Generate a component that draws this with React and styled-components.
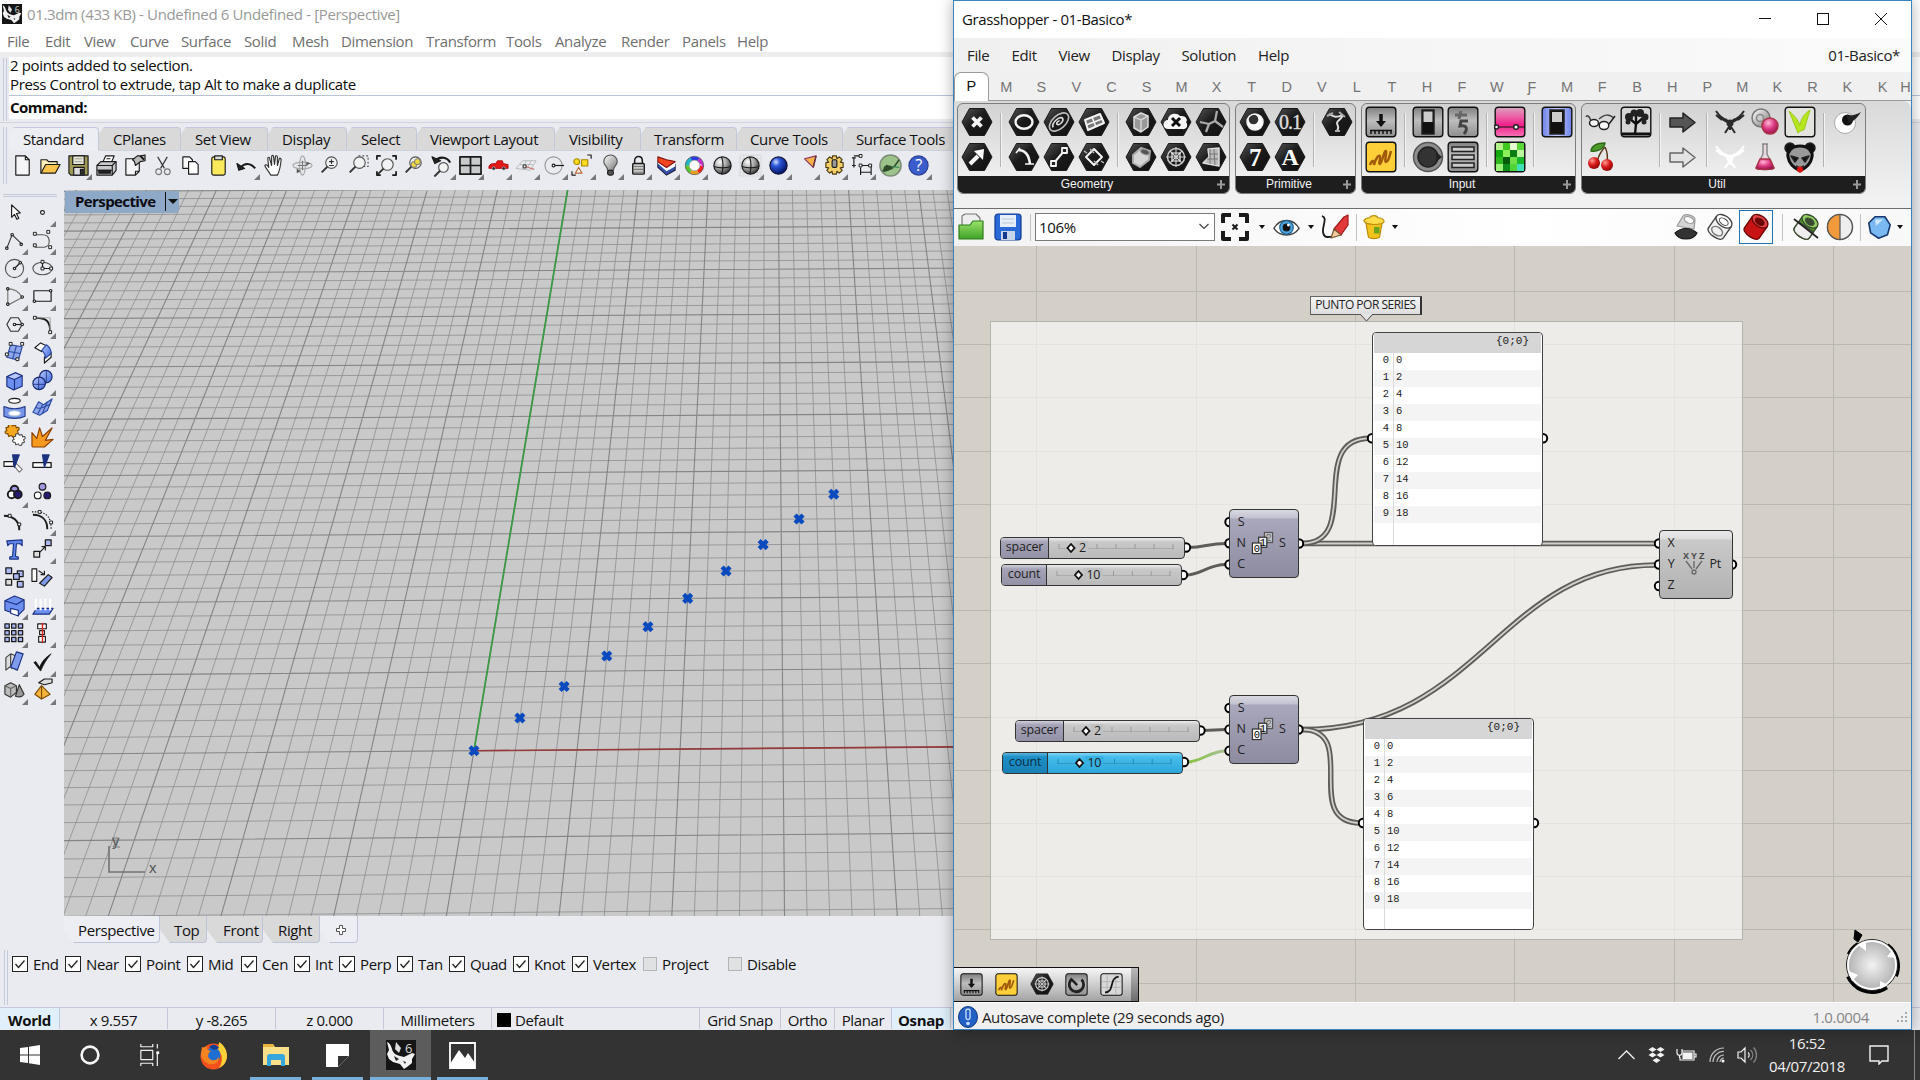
import React from "react";
import styled, { createGlobalStyle, css } from "styled-components";

const Global = createGlobalStyle`
  * { box-sizing: border-box; }
  body { margin: 0; background: #333; overflow: hidden; }
  svg { display: block; flex: none; }
`;

const ui = css`
  font-family: "Open Sans", "Noto Sans", sans-serif;
  font-size: 15px;
  letter-spacing: -0.36px;
  white-space: nowrap;
`;

const Screen = styled.div`
  ${ui}
  position: relative;
  width: 1920px;
  height: 1080px;
  display: flex;
  flex-direction: column;
  color: #111;
  overflow: hidden;
`;

/* ---------- Rhino window ---------- */
const Rhino = styled.div`
  height: 1030px;
  background: #e9ebf0;
  display: flex;
  flex-direction: column;
`;
const TitleRow = styled.div`
  height: 28px;
  background: #fff;
  display: flex;
  align-items: center;
  padding: 0 0 0 2px;
  gap: 5px;
  color: #999;
`;
const MenuRow = styled.div`
  height: 29px;
  background: #fff;
  border-bottom: 5px solid #ededef;
  display: flex;
  align-items: center;
  padding: 2px 0 0 7px;
  color: #6f6f6f;
`;
const Slot = styled.div`
  width: ${(p) => p.$w}px;
  flex: none;
`;
const CommandRow = styled.div`
  height: 66px;
  display: flex;
  padding-left: 3px;
  border-bottom: 1px solid #cfd4df;
`;
const Grip = styled.div`
  width: 4px;
  flex: none;
  border-left: 1px solid #c5cad8;
  border-right: 1px solid #c5cad8;
  margin: ${(p) => p.$m || "1px 2px 1px 0"};
`;
const CommandBox = styled.div`
  flex: 1;
  height: 62px;
  background: #fff;
  color: #0c0c0c;
`;
const CommandLine = styled.div`
  height: ${(p) => p.$h || 20}px;
  line-height: ${(p) => (p.$h || 20) - 1}px;
  padding-left: 1px;
`;
const Prompt = styled(CommandLine)`
  border-top: 1px solid #b9c3d6;
  font-weight: 700;
  letter-spacing: -0.5px;
`;
const ToolbarArea = styled.div`
  height: 67px;
  display: flex;
  padding: 4px 0 0 3px;
`;
const ToolbarCol = styled.div`
  flex: 1;
`;
const Tabs = styled.div`
  display: flex;
  height: 24px;
`;
const Tab = styled.div`
  width: ${(p) => p.$w}px;
  flex: none;
  height: 24px;
  line-height: 23px;
  padding-left: ${(p) => p.$pad}px;
  background: ${(p) => (p.$on ? "#eceef3" : "#d9d9da")};
  border-top: 1px solid #c2c8da;
  border-right: 1px solid #c2c8da;
  border-bottom: 1px solid ${(p) => (p.$on ? "#eceef3" : "#ced2dc")};
  border-radius: 0 4px 0 0;
  clip-path: polygon(5px 0, 100% 0, 100% 100%, 0 100%, 0 7px);
`;
const IconRow = styled.div`
  display: flex;
  height: 33px;
  margin-left: -1px;
`;
const ToolCell = styled.div`
  position: relative;
  width: 28px;
  height: 28px;
  flex: none;
  display: flex;
  align-items: center;
  justify-content: center;
`;
const Corner = styled.span`
  position: absolute;
  right: 0px;
  bottom: -1px;
  border-left: 6px solid transparent;
  border-bottom: 6px solid #77787c;
`;
const Middle = styled.div`
  height: 726px;
  display: flex;
`;
const Sidebar = styled.div`
  width: 64px;
  padding: 4px 7px 0 0;
`;
const SideRule = styled.div`
  height: 3px;
  margin: 0 0 1px 3px;
  border-top: 1px solid #c5cad8;
  border-bottom: 1px solid #c5cad8;
`;
const SideGrid = styled.div`
  display: grid;
  grid-template-columns: 28px 28px;
  grid-auto-rows: 28.1px;
`;
const Viewport = styled.div`
  position: relative;
  width: 890px;
  height: 726px;
  background: #c9c9c9;
  overflow: hidden;
`;
const ViewLabel = styled.div`
  position: absolute;
  left: 1px;
  top: 1px;
  width: 114px;
  height: 22px;
  background: #8ea8c7;
  display: flex;
  align-items: center;
  padding: 0 0 2px 10px;
  font-weight: 700;
  letter-spacing: -0.6px;
  color: #0b0b12;
  border-radius: 0 0 3px 0;
`;
const LabelArrow = styled.span`
  margin-left: auto;
  width: 14px;
  height: 19px;
  border-left: 1px solid #111;
  display: flex;
  align-items: center;
  padding-left: 2px;
  &::after {
    content: "";
    border: 5px solid transparent;
    border-top: 5px solid #111;
    border-bottom: 0;
  }
`;
const ViewTabs = styled.div`
  display: flex;
  height: 30px;
  padding-left: 64px;
`;
const ViewTab = styled.div`
  width: ${(p) => p.$w}px;
  height: 27px;
  line-height: 28px;
  padding-left: ${(p) => p.$pad}px;
  background: ${(p) => (p.$on ? "#eceef3" : "#d9d9da")};
  border-right: 1px solid #bfc5d8;
  border-bottom: 1px solid #bfc5d8;
  border-radius: 0 0 4px 0;
  clip-path: polygon(0 0, 100% 0, 100% 100%, 10px 100%, 0 14px);
`;
const OsnapRow = styled.div`
  height: 61px;
  display: flex;
  padding: 4px 0 0 4px;
`;
const OsnapList = styled.div`
  display: flex;
  padding: 0 0 0 2px;
  height: 27px;
  align-items: center;
`;
const Check = styled.div`
  width: ${(p) => p.$w}px;
  flex: none;
  display: flex;
  align-items: center;
  gap: 5px;
`;
const Box = styled.span`
  width: ${(p) => (p.$off ? 14 : 16)}px;
  height: ${(p) => (p.$off ? 14 : 16)}px;
  background: ${(p) => (p.$off ? "#e0e1e3" : "#fff")};
  border: 1px solid ${(p) => (p.$off ? "#b4b5b8" : "#222")};
`;
const StatusRow = styled.div`
  height: 22px;
  border-top: 1px solid #c3c8da;
  display: flex;
`;
const StatusCell = styled.div`
  width: ${(p) => p.$w}px;
  flex: none;
  border-right: 1px solid #c3c8da;
  display: flex;
  align-items: center;
  justify-content: ${(p) => (p.$left ? "flex-start" : "center")};
  padding: 2px 0 0 ${(p) => (p.$left ? 5 : 0)}px;
  gap: 4px;
  font-weight: ${(p) => (p.$on ? 700 : 400)};
  background: ${(p) => (p.$on ? "#e0effa" : "transparent")};
`;
const Swatch = styled.span`
  width: 14px;
  height: 14px;
  background: #000;
`;

/* ---------- Taskbar ---------- */
const Taskbar = styled.div`
  height: 50px;
  background: #333333;
  color: #f2f2f2;
  display: flex;
`;
const TaskBtn = styled.div`
  width: ${(p) => p.$w}px;
  margin-right: ${(p) => p.$gap || 0}px;
  height: 50px;
  display: flex;
  flex: none;
  align-items: center;
  justify-content: center;
  background: ${(p) => (p.$on ? "#5c5c5c" : "transparent")};
  border-bottom: 3px solid ${(p) => (p.$run ? "#78b0dc" : "transparent")};
  padding-top: 3px;
`;
const Tray = styled.div`
  margin-left: auto;
  display: flex;
  align-items: center;
  padding-right: 5px;
`;
const TrayCell = styled.div`
  width: ${(p) => p.$w}px;
  display: flex;
  justify-content: center;
`;
const Clock = styled.div`
  width: 90px;
  text-align: center;
  line-height: 23px;
`;
const ShowDesktop = styled.div`
  width: 1px;
  height: 50px;
  background: #8a8a8a;
`;

/* ---------- Grasshopper window ---------- */
const Hopper = styled.div`
  position: absolute;
  left: 953px;
  top: 0;
  width: 959px;
  height: 1030px;
  border: 1px solid #3b83bf;
  background: #f0f0f0;
  box-shadow: 0 0 14px rgba(0, 0, 0, 0.32);
  display: flex;
  flex-direction: column;
`;
const HTitle = styled.div`
  height: 37px;
  background: #fff;
  display: flex;
  align-items: center;
  padding: 0 24px 0 8px;
  color: #111;
`;
const WinButtons = styled.div`
  margin-left: auto;
  display: flex;
  gap: 46px;
`;
const HMenu = styled.div`
  height: 34px;
  background: linear-gradient(90deg, #f0f0f0, #fbfbfb);
  display: flex;
  align-items: center;
  padding: 0 11px 0 13px;
  color: #222;
`;
const Right = styled.div`
  margin-left: auto;
`;
const HTabs = styled.div`
  height: 29px;
  display: flex;
  font-family: "Liberation Sans", Arial, sans-serif;
  font-size: 14.5px;
  letter-spacing: 0;
  color: #757575;
  border-bottom: 1px solid #9a9a9a;
`;
const HTab = styled.div`
  width: ${(p) => p.$w || 35.05}px;
  flex: none;
  text-align: center;
  line-height: 30px;
`;
const HTabOn = styled.div`
  width: 35px;
  height: 29px;
  line-height: 26px;
  text-align: center;
  color: #111;
  background: #fff;
  border: 1px solid #9a9a9a;
  border-bottom: 0;
  border-radius: 7px 7px 0 0;
`;
const Ribbon = styled.div`
  height: 107px;
  display: flex;
  align-items: flex-start;
  padding: 2px 0 0 3px;
  gap: 5px;
  border-top-right-radius: 8px;
  background: linear-gradient(#d9d9d9, #f1f1f1 90%);
`;
const Panel = styled.div`
  height: 91px;
  border: 1px solid #7d7d7d;
  border-radius: 6px;
  overflow: hidden;
  background: linear-gradient(#d2d2d2, #eeeeee 70px);
  display: flex;
  flex-direction: column;
`;
const PanelBody = styled.div`
  height: 73px;
  display: flex;
  padding: 0 1px;
`;
const PanelCol = styled.div`
  width: 35px;
  padding-top: 1px;
`;
const PanelSep = styled.div`
  width: 1px;
  height: 54px;
  margin: 9px 5px 0 6px;
  background: #b3b3b3;
  box-shadow: 1px 0 #f4f4f4;
`;
const RIcon = styled.div`
  width: 35px;
  height: 35px;
  display: flex;
  align-items: center;
  justify-content: center;
`;
const PanelName = styled.div`
  height: 17px;
  background: #1e1e1e;
  color: #f4f4f4;
  font-family: "Liberation Sans", Arial, sans-serif;
  font-size: 12px;
  letter-spacing: 0;
  line-height: 16px;
  display: flex;
  padding: 0 3px 0 0;
`;
const PanelText = styled.span`
  flex: 1;
  text-align: center;
`;
const HBar = styled.div`
  height: 38px;
  border-top: 1px solid #6e6e6e;
  background: linear-gradient(90deg, #f2f2f2, #ffffff 60%, #f8f8f8);
  display: flex;
  align-items: center;
`;
const BarCell = styled.div`
  width: ${(p) => p.$w}px;
  height: 34px;
  flex: none;
  display: flex;
  align-items: center;
  justify-content: center;
  border: 1px solid ${(p) => (p.$on ? "#2273b5" : "transparent")};
  margin-left: ${(p) => p.$ml || 0}px;
`;
const BarSep = styled.div`
  width: 1px;
  height: 27px;
  flex: none;
  background: #c2c2c2;
  margin: 0 ${(p) => p.$r || 0}px 0 ${(p) => p.$l || 0}px;
`;
const Combo = styled.div`
  width: 180px;
  height: 28px;
  flex: none;
  border: 1px solid #7a7a7a;
  background: #fff;
  display: flex;
  align-items: center;
  justify-content: space-between;
  padding: 0 5px 1px 3px;
`;
const Down = styled.span`
  border: 3px solid transparent;
  border-top: 4px solid #111;
  border-bottom: 0;
`;
const Canvas = styled.div`
  position: relative;
  height: 757px;
  background: #d4d0c8;
  overflow: hidden;
`;
const Wires = styled.svg`
  position: absolute;
  left: -954px;
  top: -246px;
`;
const at = css`
  position: absolute;
  left: ${(p) => p.$x - 954}px;
  top: ${(p) => p.$y - 246}px;
`;
const Bubble = styled.div`
  ${at}
  width: 112px;
  height: 19px;
  border: 1px solid #333;
  border-top-color: #666;
  border-left-color: #666;
  border-right-width: 2px;
  border-bottom-color: #555;
  background: linear-gradient(#f5f5f5, #dedede);
  font-size: 12px;
  letter-spacing: -0.5px;
  line-height: 16px;
  text-align: center;
  color: #222;
`;
const DataPanel = styled.div`
  ${at}
  width: 171px;
  height: ${(p) => p.$h}px;
  border: 1.5px solid #444;
  border-radius: 4px;
  background: #fff;
  overflow: hidden;
  font-family: "Liberation Mono", monospace;
  font-size: 10.5px;
  letter-spacing: 0;
  color: #1c1c1c;
`;
const DataHead = styled.div`
  height: 20px;
  margin: 0 1px;
  background: #d6d6d6;
  text-align: right;
  padding-right: 12px;
  line-height: 17px;
  font-size: 11px;
`;
const DataRow = styled.div`
  height: 17px;
  line-height: 14px;
  margin: 0 1px;
  background: ${(p) => (p.$odd ? "#f4f4f4" : "#fff")};
  display: flex;
`;
const Index = styled.span`
  width: 20px;
  height: 17px;
  padding-right: 4px;
  text-align: right;
  border-right: 1px solid #dadada;
  margin-right: 2px;
`;
const Filler = styled(DataRow)`
  height: 40px;
  & > span { height: 40px; }
`;
const Node = styled.div`
  ${at}
  width: ${(p) => p.$w}px;
  height: 69px;
  border: 1.5px solid #333;
  border-radius: 4px;
  background: ${(p) =>
    p.$plain
      ? "linear-gradient(#e9e9e9 0, #dcdcdc 8px, #c9c9c9 9px, #b2b2b2 100%)"
      : "linear-gradient(#d9d9e2 0, #c3c2d0 8px, #a9a7bb 9px, #8d8ba0 100%)"};
  display: flex;
  align-items: center;
  font-size: 12.5px;
  color: #222;
`;
const Ins = styled.div`
  width: 16px;
  text-align: center;
  line-height: 21px;
  margin: -1px 0 0 3px;
`;
const NodeMid = styled.div`
  flex: 1;
  display: flex;
  justify-content: center;
`;
const Outs = styled.div`
  width: 23px;
  margin-top: -1px;
  padding-left: ${(p) => p.$pl || 0}px;
`;
const Slider = styled.div`
  ${at}
  width: ${(p) => p.$w}px;
  height: 22px;
  border: 1.5px solid #333;
  border-radius: 4px;
  overflow: hidden;
  display: flex;
  font-size: 12.5px;
  line-height: 18px;
  background: ${(p) =>
    p.$on ? "linear-gradient(#7fd4f3 0, #46bdea 4px, #2aa6da)" : "linear-gradient(#ececec 0, #c9c9c9 4px, #b9b9b9)"};
`;
const SliderName = styled.div`
  width: ${(p) => p.$w}px;
  flex: none;
  text-align: center;
  letter-spacing: -0.2px;
  border-right: 1.5px solid #333;
  color: ${(p) => (p.$on ? "#0d2f45" : "#1e1e1e")};
  background: ${(p) =>
    p.$on ? "linear-gradient(#5cb4dc 0, #1d8fc7 4px, #1880b5)" : "linear-gradient(#d0cfda 0, #a5a3b6 4px, #9391a6)"};
`;
const Dock = styled.div`
  ${at}
  width: 185px;
  height: 36px;
  border-top: 1.5px solid #111;
  border-right: 1.5px solid #111;
  border-bottom: 2px solid #111;
  background: linear-gradient(#f6f6f6, #b9b9b9 75%, #a2a2a2);
  display: flex;
  align-items: center;
`;
const DockCell = styled.div`
  width: 35px;
  display: flex;
  justify-content: center;
`;
const DockHandle = styled.div`
  margin-left: auto;
  width: 7px;
  height: 33px;
  background: linear-gradient(#bbb, #6c6c6c);
`;
const HStatus = styled.div`
  flex: 1;
  border-top: 1px solid #fff;
  display: flex;
  align-items: center;
  padding: 2px 3px 0 4px;
  gap: 4px;
  color: #1c1c1c;
`;
const Version = styled.div`
  margin-left: auto;
  margin-right: 23px;
  color: #858585;
`;

/* ---------- small drawing helpers ---------- */
const G = ({ s = 24, v = 24, children }) => (
  <svg width={s} height={s} viewBox={`0 0 ${v} ${v}`} fill="none" stroke="#1a1a1a" strokeWidth="1.2" strokeLinejoin="round">
    {children}
  </svg>
);
const P = (p) => <path {...p} />;
const Sq = ({ x, y, f = "#fff", s = 3 }) => <rect x={x - s / 2} y={y - s / 2} width={s} height={s} fill={f} strokeWidth="1" />;

const Defs = () => (
  <svg width="0" height="0" style={{ position: "absolute" }}>
    <defs>
      <linearGradient id="hex" x1="0" y1="0" x2="1" y2="1">
        <stop offset="0" stopColor="#555" />
        <stop offset=".45" stopColor="#1c1c1c" />
        <stop offset="1" stopColor="#111" />
      </linearGradient>
      <linearGradient id="metal" x1="0" y1="0" x2="0" y2="1">
        <stop offset="0" stopColor="#7f7f7f" />
        <stop offset=".45" stopColor="#bdbdbd" />
        <stop offset="1" stopColor="#8f8f8f" />
      </linearGradient>
      <linearGradient id="silver" x1="0" y1="0" x2="1" y2="1">
        <stop offset="0" stopColor="#fff" />
        <stop offset="1" stopColor="#777" />
      </linearGradient>
      <linearGradient id="blue" x1="0" y1="0" x2="1" y2="1">
        <stop offset="0" stopColor="#b9ccff" />
        <stop offset="1" stopColor="#3f67d8" />
      </linearGradient>
      <linearGradient id="pink" x1="0" y1="0" x2="0" y2="1">
        <stop offset="0" stopColor="#d9a3bf" />
        <stop offset=".35" stopColor="#ec5aa4" />
        <stop offset=".6" stopColor="#ef1f88" />
        <stop offset="1" stopColor="#f773b5" />
      </linearGradient>
      <linearGradient id="green" x1="0" y1="0" x2="0" y2="1">
        <stop offset="0" stopColor="#9be36c" />
        <stop offset="1" stopColor="#3fa127" />
      </linearGradient>
      <linearGradient id="periwinkle" x1="0" y1="0" x2="1" y2="0">
        <stop offset="0" stopColor="#6f83e8" />
        <stop offset=".5" stopColor="#c3ccff" />
        <stop offset="1" stopColor="#6f83e8" />
      </linearGradient>
      <radialGradient id="ballBlue" cx=".35" cy=".3" r=".7">
        <stop offset="0" stopColor="#cfe0ff" />
        <stop offset=".35" stopColor="#2c56d8" />
        <stop offset="1" stopColor="#06156b" />
      </radialGradient>
      <radialGradient id="ballGray" cx=".35" cy=".3" r=".75">
        <stop offset="0" stopColor="#fff" />
        <stop offset=".5" stopColor="#a5a5a5" />
        <stop offset="1" stopColor="#333" />
      </radialGradient>
      <radialGradient id="ballRed" cx=".35" cy=".3" r=".75">
        <stop offset="0" stopColor="#ff9a8d" />
        <stop offset=".5" stopColor="#d81a1a" />
        <stop offset="1" stopColor="#8b0505" />
      </radialGradient>
      <radialGradient id="ballPink" cx=".4" cy=".3" r=".75">
        <stop offset="0" stopColor="#ffb5d4" />
        <stop offset=".5" stopColor="#dc3a83" />
        <stop offset="1" stopColor="#8e1147" />
      </radialGradient>
      <radialGradient id="compass">
        <stop offset="0" stopColor="#f3f3f3" />
        <stop offset="1" stopColor="#b0b0b0" />
      </radialGradient>
      <linearGradient id="wire" gradientUnits="userSpaceOnUse" x1="1187" y1="0" x2="1226" y2="0">
        <stop offset="0" stopColor="#86c23b" />
        <stop offset="1" stopColor="#a9bf97" />
      </linearGradient>
    </defs>
  </svg>
);

const Rhinoceros = ({ s }) => (
  <svg width={s} height={s} viewBox="0 0 30 30">
    <rect width="30" height="30" fill="#151515" />
    <path d="M1 2c3 1 4 4 5 7 1 4 4 6 8 7l4 1 8-4 3 1-3 5 0 4-5 4-3 2-4-5-7-2-4-3-2-5 2-4z" fill="#f0f0f0" />
    <path d="M8 16l5 3-3 2zM17 21l3 1-1 2z" fill="#222" />
    <path d="M10 2l5 6-2 5-4-4zM14 13l3 2" fill="#ddd" />
    <text x="19" y="13" fontSize="13" fill="#d8d8d8" fontFamily="Open Sans, sans-serif" letterSpacing="0">6</text>
  </svg>
);

const Mag = ({ x = 13, y = 9, r = 6 }) => (
  <g>
    <circle cx={x} cy={y} r={r} fill="#f7f7f7" fillOpacity=".6" stroke="#555" />
    <path d={`M${x - r * 0.7} ${y + r * 0.7}L${x - r * 0.7 - 6} ${y + r * 0.7 + 6}`} strokeWidth="2" stroke="#333" />
  </g>
);

const gearPath = "M10 2h4l.5 3 2.5-2 3 3-2 2.5 3 .5v5l-3 .5 2 2.5-3 3-2.500-2-.5 3h-4l-.5-3-2.500 2-3-3 2-2.500-3-.5v-5l3-.5-2-2.500 3-3 2.500 2z";

const topIcons = [
  [0, <P key="a" d="M5 2h10l4 4v16H5zM15 2v4h4" fill="#f5f5f8" />],
  [0, <><P d="M2 20V6h6l2 2h9v4" fill="#fff0b8" /><P d="M2 20l5-9h15l-5 9z" fill="#f8c44c" /></>],
  [1, <><P d="M2 2h20v20H4l-2-2z" fill="#a09a57" /><rect x="6" y="2" width="12" height="9" fill="#e8e8d8" /><rect x="7" y="14" width="11" height="8" fill="#ddd" /><rect x="14" y="16" width="3" height="5" fill="#333" /><P d="M8 5h8M8 8h8" strokeWidth=".8" stroke="#888" /></>],
  [0, <><P d="M8 9l3-7h9l-3 7z" fill="#fff" /><P d="M2 12l4-4h16v9l-4 5H2z" fill="#c8c8cc" /><P d="M2 12h16v10M18 12l4-4M2 17h16M12 5h4" /><rect x="4" y="17" width="12" height="3" fill="#222" /></>],
  [0, <><P d="M3 5h14v13l-4 4H3zM13 22v-4h4" fill="#f5f5f8" /><P d="M10 6l5-4h4l4-1v6l-5 1-5 4-1-4z" fill="#bbb" /><P d="M18 2l4 4" strokeWidth="2" /></>],
  [0, <><P d="M7 3l7 12M17 3l-7 12" stroke="#333" /><circle cx="8" cy="18.5" r="3" stroke="#777" /><circle cx="17" cy="18.5" r="3" stroke="#777" /></>],
  [0, <><P d="M4 3h7l3 3v9H4z" fill="#fff" /><P d="M10 8h7l3 3v10H10z" fill="#fff" /></>],
  [0, <><rect x="5" y="3" width="14" height="19" rx="2" fill="#fbe95c" /><rect x="8" y="2" width="8" height="4" fill="#ddd" /></>],
  [1, <><P d="M6 14c4-5 10-5 15 1" strokeWidth="2.2" /><P d="M2 10l2 7 6-2z" fill="#222" /></>],
  [0, <P key="h" d="M8 22c-2-4-6-8-6-10 1-2 3 0 4 2L5 5c0-2 2-2 2 0l2 7V3c0-2 2-2 2 0l1 8 1-8c0-2 2-1 2 0v9l2-7c0-1 2-1 2 1-1 6-1 11-4 16z" fill="#fff" stroke="#333" />],
  [0, <><ellipse cx="12" cy="12" rx="10" ry="3.5" stroke="#aaa" /><ellipse cx="12" cy="12" rx="3" ry="10" stroke="#aaa" /><P d="M12 7v10M7 12h10" stroke="#777" /><P d="M6 15l4 3-4 2zM16 8l4 2-4 2z" fill="#555" stroke="none" /></>],
  [0, <><Mag /><P d="M10.5 8h5M13 5.5v5M10.500 12h5" stroke="#333" /></>],
  [0, <><Mag /><P d="M12 2h10v11h-6" strokeDasharray="2 2" stroke="#555" /></>],
  [0, <><Mag x={13} y={11} /><P d="M2 6V2h4M18 2h4v4M22 18v4h-4M6 22H2v-4" strokeWidth="1.8" /></>],
  [0, <><Mag /><circle cx="11.5" cy="11" r="3" fill="#f0dc3c" stroke="#887" /><circle cx="15" cy="8" r="3" fill="#f0dc3c" stroke="#887" /></>],
  [1, <><Mag x={13} y={14} r={5} /><P d="M5 7c4-5 12-4 15 2" strokeWidth="2.2" /><P d="M1 3l3 7 6-3z" fill="#222" /></>],
  [1, <><rect x="1" y="3" width="22" height="18" fill="#c9cacc" strokeWidth="1.8" /><P d="M12 3v18M1 12h22" strokeWidth="1.8" /></>],
  [1, <><P d="M2 13c1-3 4-3 7-3l2-3h5l1 3 5 1v4H2z" fill="#e01818" stroke="#a00" strokeWidth=".8" /><circle cx="7" cy="15" r="1.7" fill="#222" stroke="#aaa" strokeWidth=".8" /><circle cx="17.5" cy="15" r="1.7" fill="#222" stroke="#aaa" strokeWidth=".8" /></>],
  [1, <><P d="M1 15L8 7h14l-6 10zM5 11h14M12 7l-4 9M17 7l-5 9" stroke="#b5b5b5" strokeWidth=".9" /><P d="M11 13l9 3" stroke="#c77" /><Sq x={10} y={13} /></>],
  [1, <><circle cx="11" cy="12" r="9" stroke="#999" /><P d="M11 12h11" /><circle cx="11" cy="12" r="1.5" fill="#fff" /></>],
  [1, <><circle cx="6" cy="8" r="3" fill="#ffdb1d" stroke="#a80" /><rect x="11" y="6" width="6.5" height="6.5" fill="#ffdb1d" stroke="#a80" /><P d="M8 14l3.500 6h-7z" fill="#fff" stroke="#b63" /><P d="M17 1h4v4M1 18v4h4" /></>],
  [1, <><P d="M9 17c0-4-4-5-4-9a7 7 0 0114 0c0 4-4 5-4 9z" fill="url(#silver)" stroke="#555" /><rect x="9" y="17" width="6" height="5" rx="2" fill="#555" /></>],
  [1, <><P d="M8 11V7c0-6 8-6 8 0v4" strokeWidth="1.6" /><rect x="6" y="10" width="12" height="11" rx="1" fill="#ccc" strokeWidth="1.5" /><P d="M7 13h10M7 16h10M7 19h10" stroke="#777" /></>],
  [1, <><P d="M3 9l9 6 9-4v6l-9 5-9-8z" fill="#314fa8" stroke="#224" /><P d="M3 6l9 7 9-4v4l-9 5-9-8z" fill="#fff" stroke="none" /><P d="M3 3l9 3 9 2-9 6-9-6z" fill="#f3461c" stroke="#811" /></>],
  [1, <>{["#f22", "#f2a01c", "#5cc52c", "#1fb8c9", "#2b3be0", "#c42bd0"].map((c, i) => <circle key={c} cx="12" cy="12" r="7.6" stroke={c} strokeWidth="3.8" strokeDasharray="8.1 40" strokeDashoffset={-8 * i} />)}<circle cx="12" cy="12" r="9.6" stroke="#444" strokeWidth=".7" /><circle cx="12" cy="12" r="5.500" fill="#fff" stroke="#777" strokeWidth=".6" /></>],
  [0, <><circle cx="12" cy="12" r="9" fill="url(#ballGray)" /><P d="M3 13c6 2 12 2 18 0M11 3c2 5 2 13 0 18" /></>],
  [1, <><P d="M1 1h22v22H1zM5 1v22M9 1v22M15 1v22M19 1v22M1 5h22M1 9h22M1 15h22M1 19h22" stroke="#ccc" strokeDasharray="1 1" /><circle cx="12" cy="12" r="9" fill="url(#ballGray)" /><P d="M3 13c6 2 12 2 18 0M11 3c2 5 2 13 0 18" /></>],
  [1, <circle key="b" cx="12" cy="12" r="9" fill="url(#ballBlue)" stroke="#113" />],
  [1, <><P d="M10 5l12-3-3 12z" fill="#f7b24c" stroke="#835" /><P d="M22 2l-3 12" strokeWidth="1.6" stroke="#634" /></>],
  [1, <><P d={gearPath} fill="#f3d06a" stroke="#4b3a10" /><rect x="9.500" y="6" width="5" height="8" rx="1.500" fill="#999" /></>],
  [1, <><P d="M3 2h7M3 4v10M1 4h4M1 12h4M10 12h9M10 14v8M10 19h11M21 12v10" /><Sq x={10} y={2} /><Sq x={10} y={12} /><Sq x={20} y={12} /></>],
  [0, <><circle cx="12" cy="12" r="11" fill="#9cc48a" stroke="#7c8c78" strokeWidth="1.6" /><P d="M4 18l4-6 4 2 4-1 5-7" stroke="#2f4d2b" strokeWidth="1.6" /><P d="M5 13l7-1 3 3-4 2-6 2z" fill="#2f4d2b" stroke="none" /><P d="M13 13l8 1" stroke="#385" /></>],
  [1, <><circle cx="12" cy="12" r="10" fill="#3b5ccc" stroke="#2a3f92" /><text x="12" y="18" textAnchor="middle" fontSize="17" fill="#fff" stroke="none" fontFamily="Open Sans, sans-serif">?</text></>],
];

const blueSq = (x, y, s = 6, f = "#a9b8f2") => <rect x={x} y={y} width={s} height={s} fill={f} strokeWidth="1.3" />;
const puzzle = "M3 5l3-1c-2-3 4-4 4-1l3-1 1 3c3-2 4 2 1 3l1 3-3 1c1 3-3 4-4 1l-3 1-1-3c-3 1-4-3-1-3z";
const sideIcons = [
  [0, <P key="a" d="M9 4v13l3-3 2.500 5 2-1-2.500-5 4-.5z" fill="#fff" />],
  [1, <circle key="b" cx="12" cy="12" r="2" fill="#fff" />],
  [1, <><P d="M4 20L9.500 6 20 16" stroke="#444" /><circle cx="4" cy="20" r="1.300" fill="#fff" /><circle cx="9.500" cy="6" r="1.300" fill="#fff" /><circle cx="19" cy="16" r="1.300" fill="#fff" /></>],
  [1, <><P d="M4 6h8c9 0 9 12 2 13H4" stroke="#555" /><Sq x={4} y={5} /><Sq x={18} y={3} /><Sq x={4} y={17} /><Sq x={20} y={19} /></>],
  [1, <><circle cx="12" cy="12" r="9.500" stroke="#555" /><P d="M12 12l6-6" /><circle cx="12" cy="12" r="1.300" fill="#fff" /><circle cx="18" cy="6" r="1.300" fill="#fff" /></>],
  [1, <><ellipse cx="12" cy="12" rx="10" ry="6.500" stroke="#555" /><P d="M12 5v7h9" /><Sq x={12} y={5} /><Sq x={12} y={12} /><Sq x={21} y={12} /></>],
  [1, <><P d="M5 21V4c7 0 12 3 15 9z" stroke="#777" /><circle cx="5" cy="4" r="1.300" fill="#fff" /><circle cx="20" cy="12.500" r="1.300" fill="#fff" /><circle cx="5" cy="20" r="1.300" fill="#fff" /></>],
  [1, <><rect x="3" y="6" width="18" height="11" /><circle cx="20.500" cy="6" r="1.300" fill="#fff" /><circle cx="3.500" cy="17" r="1.300" fill="#fff" /></>],
  [1, <><P d="M8 5h8l4 7-4 7H8l-4-7z" stroke="#333" /><P d="M12 12h8" /><circle cx="12" cy="12" r="1.300" fill="#fff" /><circle cx="20" cy="12" r="1.300" fill="#fff" /></>],
  [1, <><P d="M4 5c12 0 16 3 16 15" strokeWidth="2" /><P d="M4 5h16v15" stroke="#aaa" /><Sq x={4} y={5} /><Sq x={20} y={20} /></>],
  [1, <><P d="M8 4l12 2-4 14-12-3z" fill="#8ea6ea" stroke="#2c4aa5" /><P d="M14 5l-4 14M6 11l12 2" stroke="#2c4aa5" /><Sq x={8} y={3} /><Sq x={20} y={3} /><Sq x={4} y={14} /><Sq x={15} y={19} /></>],
  [1, <><P d="M4 7l6-5 6 3-5 6z" fill="#fff" /><P d="M14 17l7-5v5l-7 6z" fill="#fff" /><P d="M11 10l5-6c3 2 5 4 5 9l-6 5c0-4-1-6-4-8z" fill="url(#blue)" stroke="#2c4aa5" /></>],
  [1, <><P d="M4 8l9-4 7 3v11l-9 4-7-4z" fill="#6c8fef" stroke="#1b2f80" /><P d="M4 8l8 3 8-4-7-3z" fill="#b7c8fb" stroke="#1b2f80" /><P d="M12 11v11" stroke="#1b2f80" /></>],
  [1, <><circle cx="15.500" cy="8" r="6.500" fill="url(#blue)" stroke="#15276e" /><circle cx="8.500" cy="15" r="6.500" fill="url(#blue)" stroke="#15276e" /><P d="M2 16h13M8 9v12M16 2v12" stroke="#15276e" strokeWidth=".8" /></>],
  [1, <><ellipse cx="12" cy="4" rx="6" ry="2.500" fill="#fff" /><P d="M1 10c6 3 16 3 22 0v10c-6 3-16 3-22 0z" fill="#7796ea" stroke="#223a8a" /><ellipse cx="12" cy="17" rx="6" ry="2.700" fill="#fff" stroke="#bcd" /></>],
  [1, <><P d="M2 16L8 5l5 3 9-6-5 12-8 5-7-3z" fill="#8ea6ea" stroke="#2c4aa5" /><P d="M5 11c6 3 8-2 15-3M12 8L7 18M17 5l-5 12" stroke="#2c4aa5" /></>],
  [0, <><g transform="translate(0 -2)"><P d={puzzle} fill="#f6a821" stroke="#7a4b00" /></g><g transform="translate(8 8) scale(.9)"><P d={puzzle} fill="#fff" stroke="#444" /></g></>],
  [0, <P key="x" d="M1 22V8l5 6L9 3l3 9L22 3l-7 13 8-1-9 8H2z" fill="#f79a1c" stroke="#8a3d00" />],
  [0, <><rect x="1" y="9" width="10" height="5" fill="#fff" /><P d="M11 13l3-2 6 6-3 3z" fill="#fff" stroke="#777" /><P d="M10 2h7l-5 13z" fill="#1d3380" stroke="#1d3380" /></>],
  [0, <><rect x="2" y="10" width="19" height="5" fill="#fff" strokeWidth="1.400" /><P d="M12 2h7l-5 13z" fill="#1d3380" stroke="#1d3380" /></>],
  [1, <><circle cx="12" cy="9" r="4" fill="#9d98e0" strokeWidth="2" /><circle cx="9" cy="14" r="4" fill="#fff" strokeWidth="2" /><circle cx="15.500" cy="14" r="4" fill="#241c70" strokeWidth="2" /></>],
  [0, <><circle cx="12" cy="6" r="3.500" fill="#9d98e0" /><circle cx="7" cy="15" r="3.500" fill="#fff" /><circle cx="17" cy="15" r="3.500" fill="#241c70" /></>],
  [0, <><P d="M1 6c9 0 16 5 16 15" strokeWidth="2" /><Sq x={7} y={6} /><Sq x={17} y={15} /></>],
  [1, <><P d="M2 5c9 0 15 5 15 15" strokeWidth="2" /><P d="M1 2h8c8 2 12 6 12 18" strokeDasharray="1.500 1.500" /><Sq x={9} y={2} /><Sq x={21} y={13} /></>],
  [0, <P key="t" d="M4 3l16-1v6l-2-2h-4l-1 13 3 1v2H7v-2l3-1 1-13H7L5 8z" fill="#5f86ea" stroke="#1c3184" />],
  [1, <><P d="M9 15l6-6M11 9h4v4" />{blueSq(3, 14, 6, "#ddd")}{blueSq(15, 2)}</>],
  [0, <>{blueSq(3, 2)}{blueSq(15, 5)}{blueSq(11, 8)}{blueSq(3, 14, 6, "#ddd")}{blueSq(15, 16)}</>],
  [0, <><rect x="1" y="3" width="5" height="13" fill="#fff" /><P d="M8 5l6 4M14 5v4h-4" /><P d="M9 18l9-9 4 3-8 9z" fill="#7e9bee" /></>],
  [1, <><P d="M2 7l10-5 10 4v10l-6 6-14-5z" fill="#6c8fef" stroke="#1b2f80" /><P d="M2 7l12 4 8-5" stroke="#1b2f80" /><P d="M8 15l8 2v6l-8-3z" fill="#fff" stroke="#1b2f80" /></>],
  [1, <><P d="M2 21l4-6h17l-4 6z" fill="#6c8fef" stroke="#1b2f80" /><P d="M5 5v12M10 5v12M15 5v12M20 5v12" stroke="#fff" strokeWidth="2.200" /></>],
  [1, <>{[2, 9, 16].map((x) => [2, 9, 16].map((y) => <g key={x + "-" + y}>{blueSq(x, y, 4.5)}</g>))}</>],
  [1, <><rect x="7" y="2" width="9" height="5" fill="#fff" /><rect x="9" y="9" width="5" height="4" fill="#fff" /><rect x="8" y="15" width="7" height="6" fill="#fff" /><P d="M12 1v21" stroke="#d22" strokeWidth="1.500" /></>],
  [1, <><P d="M3 8l5-4v13l-5 4zM8 4l5 2-4 14" fill="#ddd" stroke="#444" /><P d="M14 2l7 2-6 17-7-3z" fill="#7e9bee" stroke="#1b2f80" /></>],
  [1, <P key="c" d="M3 13l2-1 4 6c3-7 6-10 12-14-5 6-8 11-11 18z" fill="#111" strokeWidth=".8" />],
  [1, <><P d="M2 8l6-3 6 3v7l-6 5-6-3z" fill="#bbb" stroke="#333" /><P d="M2 8l6 3 6-3M8 11v9" stroke="#666" /><P d="M13 19l4-12 5 10c-2 3-6 3-9 2z" fill="#999" stroke="#333" /></>],
  [1, <><P d="M4 17L11 8l9 9-9 5z" fill="#f5b53a" stroke="#7a4b00" /><P d="M11 8v14" stroke="#7a4b00" /><P d="M8 5l6-4h8v4l-8 2zM18 1h4" fill="#ddd" /></>],
];

/* ---------- Grasshopper ribbon icons ---------- */
const Hex = ({ children, s = 32 }) => (
  <svg width={s} height={s} viewBox="0 0 32 32" fill="none" stroke="#f4f4f4" strokeWidth="2" strokeLinejoin="round">
    <path d="M1 16L8.500 2.500h15L31 16l-7.500 13.500h-15z" fill="url(#hex)" stroke="#1a1a1a" strokeWidth="1" />
    {children}
  </svg>
);
const Tile = ({ children, f = "url(#metal)", s = 32 }) => (
  <svg width={s} height={s} viewBox="0 0 32 32" fill="none" stroke="#222" strokeWidth="1.500">
    <rect x="1.200" y="1.200" width="29.600" height="29.600" rx="3" fill={f} stroke="#111" strokeWidth="1.400" />
    {children}
  </svg>
);
const Free = ({ children, s = 32 }) => (
  <svg width={s} height={s} viewBox="0 0 32 32" fill="none" stroke="#222" strokeWidth="1.500" strokeLinejoin="round">
    {children}
  </svg>
);
const serif = "Liberation Serif, serif";

const MeshIcon = ({ s }) => (
  <Hex s={s}>
    <circle cx="16" cy="16" r="8.500" strokeWidth="1.500" stroke="#ccc" />
    <P d="M16 6v20M6 16h20M10 10l12 12M22 10L10 22" strokeWidth="1.100" stroke="#ccc" />
    <rect x="12" y="12" width="8" height="8" strokeWidth="1.200" />
  </Hex>
);
const ImportTile = ({ s }) => (
  <Tile s={s}>
    <P d="M16 8v8" strokeWidth="3.500" stroke="#111" />
    <P d="M11 15h10l-5 6z" fill="#111" stroke="none" />
    <P d="M5 24.500h22M6 24v4M10 24v4M14 24v4M18 24v4M22 24v4M26 24v4" stroke="#111" />
  </Tile>
);
const Scribble = ({ s }) => (
  <Tile f="#ffcf3a" s={s}>
    <P d="M5 24c2-6 4-5 4 0 2-8 5-10 6-9 1 2-2 8 0 8s4-14 6-13c1 2-2 11 0 11s3-4 5-11" stroke="#a05a0a" strokeWidth="2.400" />
  </Tile>
);

const geometry = [
  [[<Hex><P d="M11.500 11.500l9 9M20.500 11.500l-9 9" strokeWidth="3.800" /></Hex>, <Hex><P d="M9 23l8-8" strokeWidth="4" /><P d="M13 10l10-2-1 11z" fill="#fff" stroke="none" /></Hex>]],
  [
    [<Hex><ellipse cx="16" cy="16" rx="8.500" ry="6.800" strokeWidth="2.400" /></Hex>, <Hex><P d="M10 9c7 0 11 5 12 14" strokeWidth="2.600" /><P d="M8 12l4-5M17 23h9" strokeWidth="1.600" /></Hex>],
    [<Hex><g transform="rotate(-42 16 16)"><ellipse cx="16" cy="16" rx="11.500" ry="6.500" strokeWidth="1.600" stroke="#bbb" /><P d="M8 16c2-5 14-4 13 0-1 3-8 3-8 0 1-2 4-1 4 0" strokeWidth="1.600" stroke="#ddd" /></g></Hex>, <Hex><P d="M11 22l10-12" /><rect x="8" y="20" width="5" height="5" strokeWidth="1.800" fill="#222" /><rect x="19" y="7" width="5" height="5" strokeWidth="1.800" fill="#222" /></Hex>],
    [<Hex><P d="M7 14l15-6 4 9-16 7z" fill="#777" /><P d="M14 11l4 10M8 19l16-6" strokeWidth="1.500" /></Hex>, <Hex><P d="M16 8l8 8-8 8-8-8z" /><P d="M12 8l4 4M20 24l-4-4M9 12l-3-2M23 20l3 2" strokeWidth="1.500" stroke="#bbb" /></Hex>],
  ],
  [
    [<Hex><P d="M9 11l7-4 7 3v11l-7 5-7-4z" fill="#999" stroke="#ddd" strokeWidth="1.500" /><P d="M9 11l7 3 7-4M16 14v12" stroke="#ddd" strokeWidth="1.300" /></Hex>, <Hex><P d="M8 14l8-7 9 3-1 9-9 7-7-4z" fill="#d5d5d5" stroke="#aaa" /><ellipse cx="20" cy="11" rx="4.500" ry="2.500" fill="#555" stroke="#999" strokeWidth="1" transform="rotate(20 20 11)" /></Hex>],
    [<Hex><P d="M8 23a4.500 4.500 0 010-9c0-7 9-8 12-4 7-1 8 5 6 6 3 4 0 8-4 7z" fill="#f6f6f6" stroke="none" /><P d="M12 12l8 8M20 12l-8 8" stroke="#111" strokeWidth="3" /></Hex>, <MeshIcon />],
    [<Hex><P d="M5 16l9 2 6-3M14 18l-3 8M20 15l2-10M20 15l8 6M14 18l6-3" stroke="#aaa" strokeWidth="2.300" /></Hex>, <Hex><P d="M13 8l11-1v18l-16-3 6-6z" fill="#bbb" stroke="#ddd" strokeWidth="1.500" /><P d="M15 8v15M19 8l1 16M14 13h9M12 18h11" stroke="#777" strokeWidth="1" /></Hex>],
  ],
];
const primitive = [
  [
    [<Hex><circle cx="16" cy="16" r="8" fill="#fff" stroke="none" /><circle cx="14.500" cy="13.500" r="4.800" fill="#333" stroke="none" /><circle cx="16" cy="16" r="8" strokeWidth="1.500" /></Hex>, <Hex><text x="16" y="25" textAnchor="middle" fontSize="25" fontWeight="700" fontFamily={serif} fill="#fff" stroke="none">7</text></Hex>],
    [<Hex><text x="16" y="23" textAnchor="middle" fontSize="20" letterSpacing="-1" fontFamily={serif} fill="#ddd" stroke="#ddd" strokeWidth=".4">0.1</text></Hex>, <Hex><text x="16" y="24" textAnchor="middle" fontSize="24" fontWeight="700" fontFamily={serif} fill="#fff" stroke="none">A</text></Hex>],
  ],
  [[<Hex><P d="M8 8c5 3 8 4 13 1 1 4-5 5-5 8 0 3 3 3 0 8" stroke="#ddd" strokeWidth="2" /><P d="M6 10l6-3M18 6l6 5M14 25h5" stroke="#aaa" /></Hex>]],
];
const greens = ["#b5f08a", "#3fc91f", "#e6ffd0", "#5ad83a", "#12a812", "#8cf05a", "#0a7d10", "#bdf7a0", "#2fb921", "#055a0c", "#6fe04a", "#19b52a", "#9cf37a", "#0b8f18", "#4fd23a", "#3fe0b8"];
const inputs = [
  [[<ImportTile />, <Scribble />]],
  [
    [<Tile><rect x="10" y="4" width="12" height="24" fill="#111" /><rect x="11.500" y="5.500" width="9" height="10.500" fill="#ccc" stroke="none" /></Tile>, <Free><circle cx="16" cy="16" r="14.500" fill="#8d8d8d" stroke="#555" /><circle cx="16" cy="16" r="10" fill="#333" stroke="#222" /><P d="M24 11l6 5-6 5z" fill="#222" stroke="none" /></Free>],
    [<Tile><P d="M8 9h12M14 5l-2 8" strokeWidth="3" stroke="#666" /><P d="M21 15h-7l-1 5c7-1 8 3 4 8" strokeWidth="3" stroke="#444" /></Tile>, <Tile><rect x="5" y="6" width="22" height="4.500" fill="#ccc" /><rect x="5" y="14" width="22" height="4.500" fill="#ccc" /><rect x="5" y="22" width="22" height="4.500" fill="#ccc" /></Tile>],
  ],
  [[<Tile f="url(#pink)"><P d="M1 21h30" stroke="#111" strokeWidth="1.200" /><circle cx="2.500" cy="21" r="2" fill="#fff" /><circle cx="22" cy="21" r="2.300" fill="#fff" /></Tile>, <Tile f="#3fc91f">{greens.map((c, i) => <rect key={i} x={2 + (i % 4) * 7} y={2 + Math.floor(i / 4) * 7} width="7" height="7" fill={c} stroke="none" />)}</Tile>]],
  [[<Tile f="url(#periwinkle)"><rect x="9" y="4" width="14" height="24" fill="#111" /><rect x="11" y="6" width="10" height="10" fill="#ccc" stroke="none" /></Tile>]],
];
const spider = (c) => (
  <Free>
    <P d="M2 5c4 6 7 8 11 9M30 5c-4 6-7 8-11 9M6 12l7 4M26 12l-7 4M2 9l6 5M30 9l-6 5M12 13l9 14M20 13l-9 14M16 15v9" stroke={c} strokeWidth="2" />
    <circle cx="16" cy="17" r="2.800" fill={c} stroke={c} />
  </Free>
);
const util = [
  [
    [<Free><P d="M6 15C4 9 2 9 1 11M14 13c6-5 10-5 15-1" stroke="#444" /><ellipse cx="9" cy="17" rx="4.500" ry="3.500" fill="#f8f8f8" /><ellipse cx="19" cy="19.500" rx="4.800" ry="4" fill="#f8f8f8" /><P d="M13 17l2 1M24 18l6-8" /></Free>, <Free><P d="M12 20c2-6 5-11 8-14M22 21c1-6 0-11-2-15" stroke="#5a3a1a" /><P d="M6 10c1-7 8-8 14-8-1 6-8 9-14 8z" fill="#4d9a2c" stroke="#2f6a18" /><circle cx="9" cy="22" r="6" fill="url(#ballRed)" stroke="none" /><circle cx="22" cy="24" r="6" fill="url(#ballRed)" stroke="none" /></Free>],
    [<Tile f="#d5d5d5"><P d="M2 28h28" strokeWidth="3" stroke="#111" /><P d="M15 28l1-10-7-6M16 18l7-6M16 18V8" stroke="#111" strokeWidth="2.400" /><g fill="#222" stroke="none"><circle cx="9" cy="11" r="4" /><circle cx="14" cy="7" r="3.500" /><circle cx="20" cy="7" r="4" /><circle cx="25" cy="11" r="3.500" /><circle cx="8" cy="16" r="2.500" /><circle cx="24" cy="16" r="2.500" /></g></Tile>],
  ],
  [[<Free><P d="M3 12h13V7l12 9.500L16 26v-5H3z" fill="#555" stroke="#222" /></Free>, <Free><P d="M3 12h13V7l12 9.500L16 26v-5H3z" fill="#e3e3e3" stroke="#666" /></Free>]],
  [
    [spider("#2a2a2a"), spider("#ffffff")],
    [<Free><circle cx="12" cy="12" r="9" fill="url(#silver)" stroke="#777" /><circle cx="11" cy="12" r="3.500" fill="#ccc" stroke="#888" /><circle cx="21" cy="20" r="8" fill="url(#ballPink)" stroke="#a34" /></Free>, <Free><P d="M13 3h6M14 3v10L7 27c0 2 18 2 18 0L18 13V3" fill="#e8d8e0" stroke="#888" /><P d="M11 18l-4 9c0 2 18 2 18 0l-4-9z" fill="url(#ballPink)" stroke="#a34" /></Free>],
    [<Tile f="#e3e3de"><P d="M5 5l9 22c2-2 4-3 6-3l6-20c-6 4-9 9-10 15C14 14 10 9 5 5z" fill="#b6e61e" stroke="#9cc81a" strokeWidth="1" /></Tile>, <Free><circle cx="6" cy="7" r="5" fill="#111" /><circle cx="26" cy="7" r="5" fill="#111" /><P d="M16 5c9 0 13 6 12 11-1 6-6 11-12 14C10 27 5 22 4 16 3 11 7 5 16 5z" fill="#999" stroke="#111" strokeWidth="3" /><P d="M7 15l7 2-3 4zM25 15l-7 2 3 4z" fill="#111" /><P d="M12 25l4 2 4-2" /><circle cx="16" cy="28.500" r="3" fill="#e01010" stroke="none" /></Free>],
  ],
  [[<Free><circle cx="14" cy="17" r="10.500" fill="#fff" stroke="#aaa" strokeWidth="1" /><circle cx="16.500" cy="14" r="5.500" fill="#111" stroke="none" /><P d="M15 9c5 1 10 0 15-3-3 5-7 9-12 11z" fill="#222" stroke="none" /></Free>]],
];

const RibbonPanel = ({ name, groups }) => (
  <Panel>
    <PanelBody>
      {groups.map((g, i) => (
        <React.Fragment key={i}>
          {i > 0 && <PanelSep />}
          {g.map((col, j) => (
            <PanelCol key={j}>{col.map((ic, k) => <RIcon key={k}>{ic}</RIcon>)}</PanelCol>
          ))}
        </React.Fragment>
      ))}
    </PanelBody>
    <PanelName>
      <PanelText>{name}</PanelText>
      <svg width="10" height="15" viewBox="0 0 10 15"><path d="M5 4v9M1 8.500h8" stroke="#999" strokeWidth="2" /></svg>
    </PanelName>
  </Panel>
);

/* ---------- Rhino perspective grid ---------- */
const project = (x, y) => {
  const a = 9.4e-5, b = 0.009375;
  const w = 1 + a * x + b * y;
  return [(474 + a * 220000 * x + b * 768 * y) / w - 64, (750.7 - 1010 * a * x - 1010 * b * y) / w - 190];
};
const seg = (p, q) => {
  const [x1, y1] = project(...p), [x2, y2] = project(...q);
  return `M${x1.toFixed(1)} ${y1.toFixed(1)}L${x2.toFixed(1)} ${y2.toFixed(1)}`;
};
const steps = Array.from({ length: 111 }, (_, i) => i - 55);
const lines = (major) =>
  steps.filter((n) => (n % 5 === 0) === major)
    .map((n) => seg([n, -12], [n, 56]) + (n > -12 ? seg([-55, n], [55, n]) : ""))
    .join("");
const points = [0, 2, 4, 6, 8, 10, 12, 14, 16, 18].map((n) => project(n, n));

const PerspectiveView = () => (
  <Viewport>
    <svg width="890" height="726" fill="none">
      <path d={lines(false)} stroke="#8f9295" strokeWidth="1" opacity=".85" />
      <path d={lines(true)} stroke="#7b7d80" strokeWidth="1.1" opacity=".9" />
      <path d={seg([0, 0], [0, 56])} stroke="#3b9a43" strokeWidth="1.8" />
      <path d={seg([0, 0], [40, 0])} stroke="#963b3b" strokeWidth="1.6" />
      {points.map(([x, y], i) => (
        <path key={i} d={`M${x - 4} ${y - 4}l8 8m0-8l-8 8`} stroke="#0a4abf" strokeWidth="4.400" />
      ))}
      <path d="M45 656v26h36" stroke="#737373" strokeWidth="1.600" />
      <g fill="#555" fontSize="15" letterSpacing="0" fontFamily="Liberation Sans, sans-serif">
        <text x="48" y="656">y</text><text x="85" y="683">x</text>
      </g>
      <path d="M48 648h7l-6 9h7" stroke="#777" />
    </svg>
    <ViewLabel>Perspective<LabelArrow /></ViewLabel>
  </Viewport>
);

/* ---------- Canvas ---------- */
const values = [0, 2, 4, 6, 8, 10, 12, 14, 16, 18];
const NumberPanel = ({ x, y, h }) => (
  <DataPanel $x={x} $y={y} $h={h}>
    <DataHead>{"{0;0}"}</DataHead>
    {values.map((v, i) => (
      <DataRow key={v} $odd={i % 2 === 1}><Index>{i}</Index>{v}</DataRow>
    ))}
    <Filler><Index /></Filler>
  </DataPanel>
);
const SeriesNode = ({ x, y }) => (
  <Node $x={x} $y={y} $w={70}>
    <Ins>S<br />N<br />C</Ins>
    <NodeMid>
      <svg width="23" height="24" viewBox="0 0 24 24" fontSize="11" letterSpacing="0" fontFamily="Liberation Mono, monospace">
        <g stroke="#333" strokeWidth="1.300">
          <rect x="14" y="1" width="8.500" height="10.500" fill="#c4c4c8" stroke="#555" /><rect x="8" y="6" width="8.500" height="10.500" fill="#eee" /><rect x="1.500" y="12" width="9" height="11" fill="#fff" />
        </g>
        <text x="15" y="10" fill="#666">2</text><text x="9" y="15">1</text><text x="2.800" y="21.500">0</text>
      </svg>
    </NodeMid>
    <Outs $pl={4}>S</Outs>
  </Node>
);
const NumberSlider = ({ x, y, w, name, label, val, knob, on }) => (
  <Slider $x={x} $y={y} $w={w} $on={on}>
    <SliderName $w={label} $on={on}>{name}</SliderName>
    <svg width={w - label - 3} height="19" fontSize="12.5" fontFamily="Open Sans, sans-serif">
      <path d={`M10 10.500h${w - label - 22}`} stroke={on ? "#3398c4" : "#acacac"} />
      {[0, 1, 2, 3, 4, 5, 6].map((i) => (
        <path key={i} d={`M${10 + (i * (w - label - 23)) / 6} 6v5`} stroke={on ? "#2388b4" : "#999"} />
      ))}
      <rect x={knob + 5} y="3" width={val.length * 7 + 5} height="13" fill={on ? "#37b1e2" : "#c1c1c1"} />
      <path d={`M${knob} 6l3.500 4-3.500 4-3.500-4z`} fill="#fff" stroke="#111" strokeWidth="1.800" />
      <text x={knob + 8} y="14" fill="#222">{val}</text>
    </svg>
  </Slider>
);
const Wire = ({ d }) => (
  <g fill="none">
    <path d={d} stroke="#5f5d59" strokeWidth="5.400" />
    <path d={d} stroke="#d3d1cc" strokeWidth="1.800" />
  </g>
);
const ports = [
  [1229.5, 522], [1229.5, 543.3], [1229.5, 564.5], [1299, 543.5], [1186, 547.5], [1183, 575],
  [1229.5, 708], [1229.5, 729.5], [1229.5, 750.7], [1298.5, 729.5], [1200.5, 730.5], [1184, 762],
  [1372, 438.3], [1543, 438.3], [1363, 823], [1534, 823],
  [1659, 543.5], [1659, 564.5], [1659, 586], [1732, 564.5],
];
const HopperCanvas = () => (
  <Canvas>
    <Wires width="1920" height="1080">
      <path
        d={[1036.5, 1196.5, 1355.5, 1514.5, 1674.5, 1833.5].map((x) => `M${x} 246v760`).join("") +
          Array.from({ length: 14 }, (_, i) => `M954 ${Math.round(291 + i * 53.2) + 0.5}h960`).join("")}
        stroke="#bbb8b0"
      />
      <rect x="990.5" y="321.5" width="752" height="618" fill="#fff" fillOpacity=".6" stroke="#a9a8a2" strokeOpacity=".8" />
      <g fill="none" stroke="#5f5d59" strokeWidth="3">
        <path d="M1189 547.500c15 0 20-4 37-4M1186 575c15 0 22-10.500 40-10.500M1203 730.500l23-1" />
        <path d="M1187 762c15 0 22-11 39-11" stroke="url(#wire)" />
      </g>
      <Wire d="M1302 543.500H1656" />
      <Wire d="M1302 543.500C1363 543.500 1306 438.300 1370 438.300" />
      <Wire d="M1302 729.500C1480 729.500 1500 565 1656 565" />
      <Wire d="M1302 729.500C1361 729.500 1300 823 1361 823" />
      {ports.map(([x, y], i) => <circle key={i} cx={x} cy={y} r="4.200" fill="#fff" stroke="#000" strokeWidth="2" />)}
      <g>
        <circle cx="1872" cy="966" r="25.500" fill="none" stroke="#000" strokeWidth="5" strokeDasharray="45 22 14 30 34 15" transform="rotate(55 1872 966)" />
        <circle cx="1872" cy="965" r="25.500" fill="url(#compass)" stroke="#222" />
        <circle cx="1872" cy="965" r="24" fill="none" stroke="#fff" strokeWidth="1.800" />
        <path d="M1858 945l8-3v9zM1887 957l5-7 4 8zM1849 971l9 4-6 6zM1880 981l8 4-8 4z" fill="#fff" />
        <path d="M1855 930l7 5-4 7-4-3z" fill="#000" stroke="#000" />
      </g>
    </Wires>
    <Bubble $x={1310} $y={296}>PUNTO POR SERIES</Bubble>
    <Wires width="1920" height="1080"><path d="M1360 314l6.500 7 6.500-7" fill="#e2e2e2" stroke="#444" /></Wires>
    <NumberPanel x={1372} y={332} h={214} />
    <NumberPanel x={1363} y={718} h={212} />
    <SeriesNode x={1229} y={509} />
    <SeriesNode x={1229} y={695} />
    <Node $x={1659} $y={530} $w={73.5} $plain>
      <Ins>X<br />Y<br />Z</Ins>
      <NodeMid>
        <svg width="22" height="24" viewBox="0 0 22 24" fill="none" stroke="#666" strokeWidth="1.300">
          <g fontSize="9" fontWeight="700" fill="#444" stroke="none" letterSpacing="0" fontFamily="Liberation Sans, sans-serif">
            <text x="0" y="7">X</text><text x="8" y="7">Y</text><text x="16" y="7">Z</text>
          </g>
          <path d="M3 9l6 8M11 9v7M19 9l-6 8" /><circle cx="11" cy="20" r="2" />
        </svg>
      </NodeMid>
      <Outs $pl={1}>Pt</Outs>
    </Node>
    <NumberSlider x={1000} y={537} w={185} label={48} name="spacer" val="2" knob={22} />
    <NumberSlider x={1001} y={564} w={181} label={45} name="count" val="10" knob={31.5} />
    <NumberSlider x={1015} y={720} w={185} label={48} name="spacer" val="2" knob={22} />
    <NumberSlider x={1002} y={752} w={181} label={45} name="count" val="10" knob={31.5} on />
    <Dock $x={954} $y={967}>
      <DockCell><ImportTile s={23} /></DockCell>
      <DockCell><Scribble s={23} /></DockCell>
      <DockCell><MeshIcon s={24} /></DockCell>
      <DockCell><Tile s={23}><P d="M10 8a10 10 0 1013 1" stroke="#222" strokeWidth="4" /><P d="M9 9l8 8" strokeWidth="3.500" /></Tile></DockCell>
      <DockCell><Tile s={23} f="#d8d8d8"><P d="M2 12h28M2 20h28M10 2v28M22 2v28" stroke="#aaa" strokeWidth="1" /><P d="M7 27c14 0 5-21 19-22" stroke="#111" strokeWidth="2.400" /></Tile></DockCell>
      <DockHandle />
    </Dock>
  </Canvas>
);

const Cyl = ({ body, hole, line = "#444", half, wire }) => (
  <G s={30} v={30}>
    <g transform="rotate(35 15 15)" stroke={line} strokeWidth="1.400">
      <P d="M6 8v14c0 6 18 6 18 0V8" fill={body} />
      {half && <P d="M6 15v7c0 6 18 6 18 0v-7z" fill="#eee" />}
      {wire && <ellipse cx="15" cy="20" rx="6" ry="4" stroke="#777" />}
      <ellipse cx="15" cy="8" rx="9" ry="5.500" fill={hole} />
      <ellipse cx="15" cy="8.500" rx="5" ry="3" fill={wire ? "#fff" : line} strokeWidth="1" />
    </g>
    {half && <P d="M3 7l24 19" stroke="#222" strokeWidth="1.600" />}
  </G>
);

const HopperWindow = () => (
  <Hopper>
    <HTitle>
      <Slot $w={300}>Grasshopper - 01-Basico*</Slot>
      <WinButtons>
        <svg width="12" height="12" fill="none" stroke="#111"><path d="M0 5.500h12" /></svg>
        <svg width="12" height="12" fill="none" stroke="#111"><rect x=".5" y=".5" width="11" height="11" /></svg>
        <svg width="12" height="12" fill="none" stroke="#111"><path d="M0 0l12 12M12 0L0 12" /></svg>
      </WinButtons>
    </HTitle>
    <HMenu>
      {[["File", 44.5], ["Edit", 47], ["View", 53], ["Display", 70], ["Solution", 76.5], ["Help", 60]].map(([t, w]) => <Slot key={t} $w={w}>{t}</Slot>)}
      <Right>01-Basico*</Right>
    </HMenu>
    <HTabs>
      <HTabOn>P</HTabOn>
      {"MSVCSMXTDVLTHFWƑMFBHPMKRKK".split("").map((c, i) => <HTab key={i}>{c}</HTab>)}
      <HTab $w={11}>H</HTab>
    </HTabs>
    <Ribbon>
      <RibbonPanel name="Geometry" groups={geometry} />
      <RibbonPanel name="Primitive" groups={primitive} />
      <RibbonPanel name="Input" groups={inputs} />
      <RibbonPanel name="Util" groups={util} />
    </Ribbon>
    <HBar>
      <BarCell $w={36}><G s={28} v={28}><P d="M4 14V3l3-2h11l4 4v9" fill="#eee" stroke="#777" /><P d="M1 26V12h11l3-4h10v18z" fill="url(#green)" stroke="#2f7d1c" /></G></BarCell>
      <BarCell $w={36}><G s={28} v={28}><rect x="1" y="1" width="26" height="26" rx="3" fill="#2a6ad8" stroke="#103a90" /><rect x="6" y="2" width="16" height="12" fill="#e8eef8" stroke="none" /><P d="M8 6h12M8 10h12" stroke="#b8c8dc" /><rect x="7" y="18" width="14" height="9" fill="#c8d4e8" stroke="none" /><rect x="9" y="19" width="4" height="7" fill="#103a90" stroke="none" /></G></BarCell>
      <BarSep $l={4} $r={4} />
      <Combo>106%<svg width="10" height="7" fill="none" stroke="#444" strokeWidth="1.200"><path d="M.5 1l4.500 4.500L9.500 1" /></svg></Combo>
      <BarCell $w={40}><G s={28} v={28}><P d="M2 10V2h8M18 2h8v8M26 18v8h-8M10 26H2v-8" strokeWidth="4" /><P d="M11.500 11.500l5 5M16.500 11.500l-5 5" strokeWidth="2" /></G></BarCell>
      <BarCell $w={13}><Down /></BarCell>
      <BarCell $w={37}><G s={29} v={30}><P d="M2 16C8 5 22 5 28 16c-6 9-20 9-26 0z" fill="#fff" stroke="#444" strokeWidth="1.500" /><circle cx="15" cy="15" r="7" fill="#4fa9e0" stroke="#1c5f94" /><circle cx="15" cy="15" r="3.500" fill="#111" /><circle cx="17" cy="12.500" r="1.500" fill="#fff" stroke="none" /></G></BarCell>
      <BarCell $w={12}><Down /></BarCell>
      <BarCell $w={36}><G s={30} v={30}><P d="M2 4c6 2 0 10 1 16 1 7 6 5 12 4" strokeWidth="1.800" /><P d="M14 17L24 5l4-2v10L21 23z" fill="#e23a3a" stroke="#a01818" /><P d="M14 17l7 6-10 3z" fill="#f3c9a0" stroke="#753" /></G></BarCell>
      <BarSep $l={3} />
      <BarCell $w={33}><G s={26} v={28}><P d="M5 8l3 17c2 2 10 2 12 0l3-17z" fill="#f3c21b" stroke="#b98a08" /><P d="M3 7c2-3 5-3 6-3 2-3 8-3 9 0 2 0 6 1 7 4-2 4-20 5-22-1z" fill="#ffdc4a" stroke="#b98a08" /><rect x="14" y="14" width="6" height="7" fill="#6ca41c" stroke="none" /></G></BarCell>
      <BarCell $w={10}><Down /></BarCell>
      <BarCell $w={34} $ml={269}><G s={28} v={28}><P d="M5 13l6-10c4-3 12 0 12 4l-1 9z" fill="#d5d5d5" stroke="#999" /><ellipse cx="17" cy="7" rx="5" ry="3" fill="#fff" stroke="#999" transform="rotate(25 17 7)" /><P d="M3 20c6-6 16-6 22 0-4 8-18 8-22 0z" fill="#333" /></G></BarCell>
      <BarCell $w={34}><Cyl body="#f0f0f0" hole="#fff" wire /></BarCell>
      <BarCell $w={34} $ml={2} $on><Cyl body="#c81414" hole="#e04444" line="#6a0606" /></BarCell>
      <BarSep $l={9} $r={5} />
      <BarCell $w={35}><Cyl body="#4f9a2a" hole="#8fcf60" line="#3a4a30" half /></BarCell>
      <BarCell $w={34}><G s={28} v={28}><circle cx="14" cy="14" r="12.500" fill="#eee" stroke="#555" strokeWidth="1.500" /><P d="M14 1.500a12.500 12.500 0 000 25z" fill="#f09a3c" stroke="#555" /></G></BarCell>
      <BarSep $l={3} />
      <BarCell $w={36}><G s={25} v={28}><P d="M9 2l11 0 6 9-3 11-10 4-9-6-2-11z" fill="#79b8f0" stroke="#16386e" strokeWidth="1.800" /><P d="M9 5l9 0-8 7z" fill="#cfe6fb" stroke="none" /></G></BarCell>
      <BarCell $w={6}><Down /></BarCell>
    </HBar>
    <HopperCanvas />
    <HStatus>
      <svg width="20" height="24" viewBox="0 0 20 24"><ellipse cx="10" cy="12" rx="9.500" ry="10.500" fill="#2260c4" stroke="#143a80" /><path d="M8 5c0-1 4-1 4 0v8c0 2-4 2-4 0z" fill="none" stroke="#cfe0ff" strokeWidth="1.300" /><circle cx="10" cy="18.500" r="1.800" fill="#cfe0ff" /></svg>
      Autosave complete (29 seconds ago)
      <Version>1.0.0004</Version>
      <svg width="12" height="12" fill="#aaa"><path d="M9 1h2v2H9zM9 5h2v2H9zM5 5h2v2H5zM9 9h2v2H9zM5 9h2v2H5zM1 9h2v2H1z" /></svg>
    </HStatus>
  </Hopper>
);

const W = (p) => <G s={p.s || 24} v={24}><g stroke="#f2f2f2" strokeWidth="1.300">{p.children}</g></G>;

export default function App() {
  return (
    <Screen>
      <Global />
      <Defs />
      <Rhino>
        <TitleRow><Rhinoceros s={20} /><Slot $w={500}>01.3dm (433 KB) - Undefined 6 Undefined - [Perspective]</Slot></TitleRow>
        <MenuRow>
          {[["File", 38], ["Edit", 39], ["View", 46], ["Curve", 51], ["Surface", 63], ["Solid", 48], ["Mesh", 49], ["Dimension", 85], ["Transform", 80], ["Tools", 49], ["Analyze", 66], ["Render", 61], ["Panels", 55], ["Help", 50]].map(([t, w]) => <Slot key={t} $w={w}>{t}</Slot>)}
        </MenuRow>
        <CommandRow>
          <Grip />
          <CommandBox>
            <CommandLine $h={18}>2 points added to selection.</CommandLine>
            <CommandLine>Press Control to extrude, tap Alt to make a duplicate</CommandLine>
            <Prompt $h={23}>Command:</Prompt>
          </CommandBox>
        </CommandRow>
        <ToolbarArea>
          <Grip $m="0 2px 6px 0" />
          <ToolbarCol>
            <Tabs>
              {[["Standard", 90, 14], ["CPlanes", 82, 14], ["Set View", 87, 14], ["Display", 79, 14], ["Select", 70, 14], ["Viewport Layout", 138, 13], ["Visibility", 86, 14], ["Transform", 96, 13], ["Curve Tools", 106, 13], ["Surface Tools", 120, 13]].map(([t, w, p], i) => (
                <Tab key={t} $w={w} $pad={p} $on={i === 0}>{t}</Tab>
              ))}
            </Tabs>
            <IconRow>
              {topIcons.map(([c, ic], i) => <ToolCell key={i}><G s={23}>{ic}</G>{c ? <Corner /> : null}</ToolCell>)}
            </IconRow>
          </ToolbarCol>
        </ToolbarArea>
        <Middle>
          <Sidebar>
            <SideRule />
            <SideGrid>
              {sideIcons.map(([c, ic], i) => <ToolCell key={i}><G s={23}>{ic}</G>{c ? <Corner /> : null}</ToolCell>)}
            </SideGrid>
          </Sidebar>
          <PerspectiveView />
        </Middle>
        <ViewTabs>
          <ViewTab $w={96} $pad={14} $on>Perspective</ViewTab>
          <ViewTab $w={47} $pad={14}>Top</ViewTab>
          <ViewTab $w={56} $pad={16}>Front</ViewTab>
          <ViewTab $w={57} $pad={15}>Right</ViewTab>
          <ViewTab $w={38} $pad={15} $on>
            <svg width="12" height="26" fill="#fff" stroke="#555"><path d="M4.500 9.500h3v3h3v3h-3v3h-3v-3h-3v-3h3z" /></svg>
          </ViewTab>
        </ViewTabs>
        <OsnapRow>
          <Grip $m="0 2px 2px 0" />
          <OsnapList>
            {[["End", 53], ["Near", 60], ["Point", 62], ["Mid", 54], ["Cen", 53], ["Int", 45], ["Perp", 58], ["Tan", 52], ["Quad", 64], ["Knot", 59], ["Vertex", 71], ["Project", 85, 1], ["Disable", 90, 1]].map(([t, w, off]) => (
              <Check key={t} $w={w}>
                <Box $off={off}>{!off && <svg width="14" height="14" fill="none" stroke="#222" strokeWidth="1.300"><path d="M2.500 7l3 3.500 6-7" /></svg>}</Box>
                {t}
              </Check>
            ))}
          </OsnapList>
        </OsnapRow>
        <StatusRow>
          <StatusCell $w={60} $on>World</StatusCell>
          <StatusCell $w={108}>x 9.557</StatusCell>
          <StatusCell $w={108}>y -8.265</StatusCell>
          <StatusCell $w={108}>z 0.000</StatusCell>
          <StatusCell $w={108}>Millimeters</StatusCell>
          <StatusCell $w={208} $left><Swatch />Default</StatusCell>
          <StatusCell $w={81}>Grid Snap</StatusCell>
          <StatusCell $w={54}>Ortho</StatusCell>
          <StatusCell $w={57}>Planar</StatusCell>
          <StatusCell $w={59} $on>Osnap</StatusCell>
        </StatusRow>
      </Rhino>
      <HopperWindow />
      <Taskbar>
        <TaskBtn $w={60}><svg width="20" height="20" fill="#fff"><path d="M0 3l8-1v7.500H0zM9 1.800L20 0v9.500H9zM0 10.500h8V18l-8-1zM9 10.500h11V20L9 18.200z" /></svg></TaskBtn>
        <TaskBtn $w={60}><svg width="20" height="20" fill="none" stroke="#f5f5f5" strokeWidth="2.600"><circle cx="10" cy="10" r="8.400" /></svg></TaskBtn>
        <TaskBtn $w={60} $gap={8}><W s={22}><P d="M2 0v3h13V0M2 24v-3h13v3M2 7h13v10H2zM20 0v5M20 9v15" /><rect x="19" y="8" width="3" height="3" fill="#fff" stroke="none" /></W></TaskBtn>
        <TaskBtn $w={50} $gap={12}>
          <svg width="29" height="29" viewBox="0 0 29 29"><circle cx="14.500" cy="15.500" r="13" fill="#f4511e" /><path d="M20 1c5 3 8 8 8 14 0 5-3 10-8 12 4-6 4-14-1-18z" fill="#ffd23a" /><circle cx="14" cy="14" r="7.500" fill="#1f6fd0" /><path d="M3 6c2 1 3 0 5-1-1 3 1 4 4 5-3 2-4 6-1 8 3 3 8 0 9-2 0 5-4 8-9 7-6-1-9-6-9-10z" fill="#f5831f" /><path d="M10 6c4-4 8-2 10 1l-5 2z" fill="#123f93" /></svg>
        </TaskBtn>
        <TaskBtn $w={51} $gap={11} $run>
          <svg width="28" height="26" viewBox="0 0 28 26"><path d="M1 2h10l2 3h14v18H1z" fill="#fbe08a" /><path d="M1 2h10l1 3H1z" fill="#e9b43c" /><path d="M5 24v-9c0-2 1-3 3-3h12c2 0 3 1 3 3v9h-4v-6H9v6z" fill="#37a6dc" /></svg>
        </TaskBtn>
        <TaskBtn $w={51} $gap={7} $run><svg width="23" height="23"><path d="M0 0h23v12L12 23H0z" fill="#fff" /><path d="M12 12h11L12 23z" fill="#333" /></svg></TaskBtn>
        <TaskBtn $w={61} $gap={6} $on $run><Rhinoceros s={30} /></TaskBtn>
        <TaskBtn $w={51} $run><svg width="27" height="27" viewBox="0 0 27 27"><path d="M1 1h25v25H1z" fill="none" stroke="#fff" strokeWidth="1.800" /><path d="M1 22L10 8l6 8 3-5 7 10v5H1z" fill="#fff" /></svg></TaskBtn>
        <Tray>
          <TrayCell $w={30}><svg width="17" height="10" fill="none" stroke="#f2f2f2" strokeWidth="1.300"><path d="M.5 9l8-8 8 8" /></svg></TrayCell>
          <TrayCell $w={30}><svg width="17" height="16" fill="#f2f2f2"><path d="M4.500 0l4 2.500-4 2.500-4-2.500zM12.500 0l4 2.500-4 2.500-4-2.500zM4.500 5.500l4 2.500-4 2.500-4-2.500zM12.500 5.500l4 2.500-4 2.500-4-2.500zM8.500 11l4 2.300L8.500 16l-4-2.700z" /></svg></TrayCell>
          <TrayCell $w={31}><svg width="21" height="15" fill="none" stroke="#f2f2f2" strokeWidth="1.200"><path d="M6 3h12v9H4V9M18 6h2v3h-2M1 1v4c0 3 5 3 5 0V1M3.500 7v3" /><rect x="7" y="5" width="9" height="5.500" fill="#f2f2f2" /></svg></TrayCell>
          <TrayCell $w={30}><svg width="17" height="16" fill="none" stroke="#bdbdbd" strokeWidth="1.200"><path d="M1 15C1 7 7 1 15 1M4 15C4 9 9 4 15 4.500M8 15c0-4 3-7 7-7M11 15c0-2 2-4 4-4" /><circle cx="14" cy="14" r="1.500" fill="#fff" stroke="none" /></svg></TrayCell>
          <TrayCell $w={30}><svg width="21" height="18" fill="none" stroke="#f2f2f2" strokeWidth="1.200"><path d="M1 6h3l4-4v14l-4-4H1zM11 6.500c1.500 1 1.500 4 0 5" /><path d="M13.500 4c3 3 3 7 0 10M16.500 1.500c4 4 4 11 0 15" stroke="#888" /></svg></TrayCell>
          <Clock>16:52<br />04/07/2018</Clock>
          <TrayCell $w={53}><svg width="20" height="20" fill="none" stroke="#f2f2f2" strokeWidth="1.400"><path d="M1 1h18v15h-6l-3 3v-3H1z" /></svg></TrayCell>
          <TrayCell $w={9} />
          <ShowDesktop />
        </Tray>
      </Taskbar>
    </Screen>
  );
}
